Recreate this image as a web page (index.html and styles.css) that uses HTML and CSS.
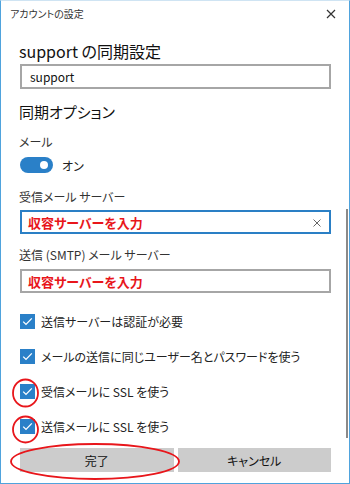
FILE: index.html
```html
<!DOCTYPE html>
<html lang="ja">
  <head>
    <meta charset="UTF-8" />
    <title>アカウントの設定</title>
    <link rel="stylesheet" href="styles.css">
  </head>
  <body>
    <div class="window">
      <div class="titlebar">
        <span class="title">アカウントの設定</span>
        <svg class="close" width="10" height="10" viewBox="0 0 10 10">
          <path d="M1 1L9 9M9 1L1 9" stroke="#333" stroke-width="1.2" fill="none" />
        </svg>
      </div>

      <div class="content">
        <h1 class="heading">support の同期設定</h1>
        <div class="field">support</div>

        <h2 class="subheading">同期オプション</h2>

        <div class="label label-mail">メール</div>
        <div class="toggle-row">
          <span class="toggle"><span class="knob"></span></span>
          <span class="toggle-text">オン</span>
        </div>

        <div class="label label-in">受信メール サーバー</div>
        <div class="field field-active">
          <span class="red-text">収容サーバーを入力</span>
          <svg class="clear" width="8" height="8" viewBox="0 0 8 8">
            <path d="M0.5 0.5L7.5 7.5M7.5 0.5L0.5 7.5" stroke="#666" stroke-width="1" fill="none" />
          </svg>
        </div>

        <div class="label label-out">送信 (SMTP) メール サーバー</div>
        <div class="field field-out">
          <span class="red-text">収容サーバーを入力</span>
        </div>

        <div class="checks">
          <div class="check-row"><span class="box"><svg width="15" height="15" viewBox="0 0 15 15"><path d="M3.2 7.6L6 10.4L11.8 4.4" stroke="#fff" stroke-width="1.3" fill="none" /></svg></span>送信サーバーは認証が必要</div>
          <div class="check-row"><span class="box"><svg width="15" height="15" viewBox="0 0 15 15"><path d="M3.2 7.6L6 10.4L11.8 4.4" stroke="#fff" stroke-width="1.3" fill="none" /></svg></span>メールの送信に同じユーザー名とパスワードを使う</div>
          <div class="check-row"><span class="box"><svg width="15" height="15" viewBox="0 0 15 15"><path d="M3.2 7.6L6 10.4L11.8 4.4" stroke="#fff" stroke-width="1.3" fill="none" /></svg></span>受信メールに SSL を使う</div>
          <div class="check-row"><span class="box"><svg width="15" height="15" viewBox="0 0 15 15"><path d="M3.2 7.6L6 10.4L11.8 4.4" stroke="#fff" stroke-width="1.3" fill="none" /></svg></span>送信メールに SSL を使う</div>
        </div>

        <div class="buttons">
          <button class="btn">完了</button>
          <button class="btn">キャンセル</button>
        </div>
      </div>

      <div class="scrollbar"></div>

      <!-- red annotation marks -->
      <svg class="marks" width="350" height="484" viewBox="0 0 350 484">
        <ellipse cx="25.5" cy="393" rx="12.5" ry="13.5" stroke="#e8161b" stroke-width="1.8" fill="none" />
        <ellipse cx="25.5" cy="429.5" rx="12.5" ry="13" stroke="#e8161b" stroke-width="1.8" fill="none" />
        <ellipse cx="95" cy="461.5" rx="84" ry="17.5" stroke="#e8161b" stroke-width="1.8" fill="none" />
      </svg>
    </div>
  </body>
</html>
```

FILE: styles.css
```css
html,
body {
  margin: 0;
  padding: 0;
}
body {
  font-family: "Noto Sans CJK JP", "Noto Sans", sans-serif;
  font-feature-settings: "palt";
  color: #222;
}

.window {
  position: relative;
  width: 350px;
  height: 484px;
  box-sizing: border-box;
  border: 1px solid #4fa3dd;
  border-top-color: #cfe4f3;
  background-color: white;
  overflow: hidden;
}

.titlebar {
  height: 25px;
  display: flex;
  align-items: center;
  justify-content: space-between;
  padding: 0 13px 0 9px;
}
.title {
  font-size: 10px;
  color: #333;
}

.content {
  padding: 0 18px 0 19px;
}

.heading {
  margin: 13px 0 0 -1px;
  font-size: 16px;
  font-weight: normal;
  line-height: 24px;
  color: #111;
}

.field {
  margin-top: 1px;
  height: 25px;
  box-sizing: border-box;
  border: 2px solid #a6a6a6;
  display: flex;
  align-items: center;
  padding: 0 8px;
  font-size: 12px;
  color: #111;
}

.subheading {
  margin: 12px 0 0 -1px;
  font-size: 15px;
  font-weight: normal;
  line-height: 22px;
  color: #111;
}

.label {
  font-size: 12px;
  line-height: 16px;
  color: #333;
  margin-left: -1px;
}
.label-mail {
  margin-top: 11px;
}
.label-in {
  margin-top: 16px;
}
.label-out {
  margin-top: 13px;
}

.toggle-row {
  margin-top: 7px;
  display: flex;
  align-items: center;
  height: 16px;
}
.toggle {
  position: relative;
  width: 33px;
  height: 16px;
  border-radius: 8px;
  background-color: #2a80c8;
}
.knob {
  position: absolute;
  top: 4px;
  right: 5px;
  width: 8px;
  height: 8px;
  border-radius: 50%;
  background-color: white;
}
.toggle-text {
  margin-left: 9px;
  font-size: 12px;
  color: #222;
}

.field-active {
  margin-top: 5px;
  height: 24px;
  border-color: #2a7fc5;
  justify-content: space-between;
  padding: 0 8px 0 6px;
}
.field-out {
  margin-top: 6px;
  height: 24px;
  padding: 0 6px;
}
.red-text {
  color: #e8161b;
  font-size: 13px;
  font-weight: bold;
}
.clear {
  margin-top: 1px;
}

.checks {
  margin-top: 18px;
  display: flex;
  flex-direction: column;
  gap: 15px;
}
.check-row {
  display: flex;
  align-items: center;
  height: 20px;
  font-size: 12px;
  color: #222;
}
.box {
  width: 15px;
  height: 15px;
  margin-right: 6px;
  background-color: #2a80c8;
  display: flex;
}

.buttons {
  margin-top: 12px;
  display: grid;
  grid-template-columns: 1fr 1fr;
  gap: 4px;
}
.btn {
  height: 24px;
  border: none;
  background-color: #cccccc;
  font-family: inherit;
  font-feature-settings: "palt";
  font-size: 12px;
  color: #111;
  padding: 0;
}

.scrollbar {
  position: absolute;
  left: 345px;
  top: 208px;
  width: 2px;
  height: 229px;
  background-color: #8a8a8a;
}

.marks {
  position: absolute;
  left: -1px;
  top: -1px;
  pointer-events: none;
}
```
